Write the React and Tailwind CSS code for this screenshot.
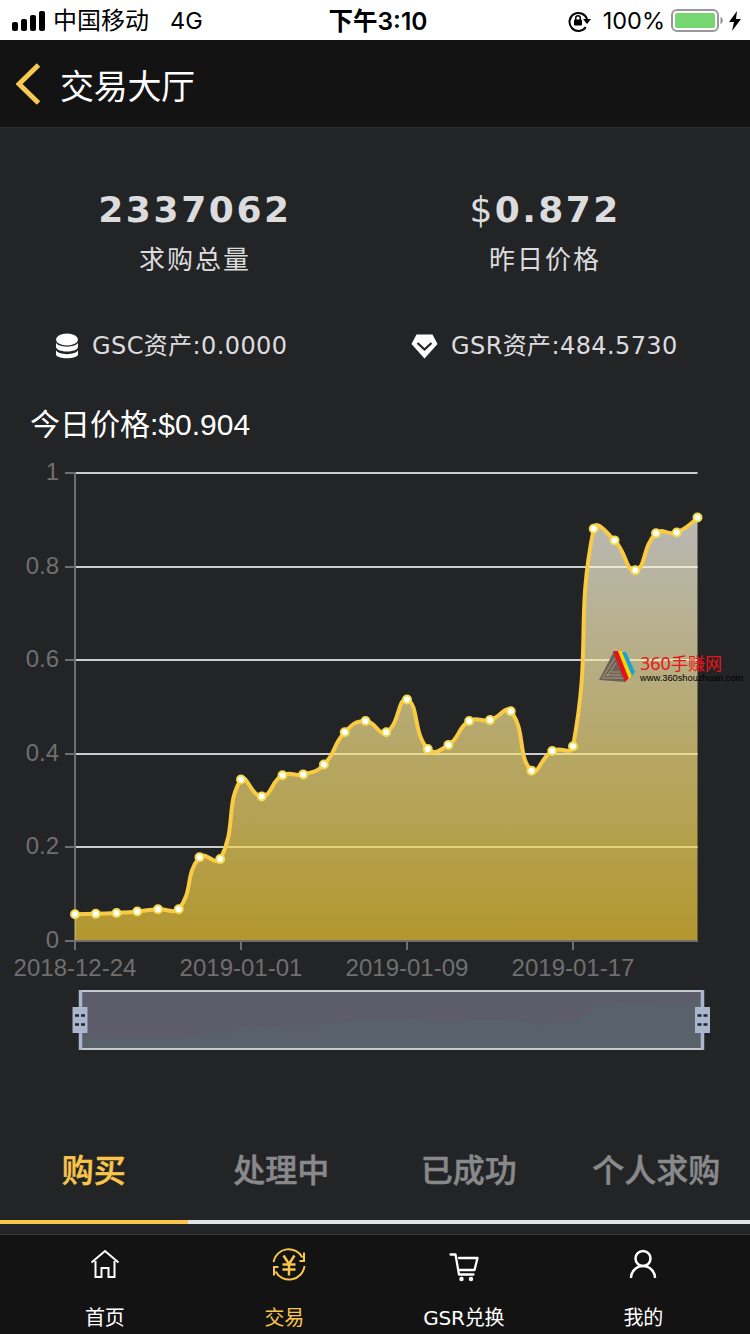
const prices = [
  0.057, 0.058, 0.06, 0.063, 0.068, 0.068, 0.179, 0.175, 0.345, 0.309, 0.354,
  0.356, 0.377, 0.446, 0.47, 0.446, 0.516, 0.41, 0.419, 0.47, 0.472, 0.491,
  0.364, 0.406, 0.416, 0.881, 0.856, 0.792, 0.871, 0.873, 0.905,
];

const ticks = [1, 0.8, 0.6, 0.4, 0.2, 0];

const dates = [
  { label: "2018-12-24", x: 75 },
  { label: "2019-01-01", x: 241 },
  { label: "2019-01-09", x: 407 },
  { label: "2019-01-17", x: 573 },
];

const tabs = ["购买", "处理中", "已成功", "个人求购"];

const X0 = 75;
const STEP = 20.75;
const Y0 = 481;
const HEIGHT = 468;

const points = prices.map((p, i) => [X0 + i * STEP, Y0 - p * HEIGHT]);

// Bezier through every point, control points kept inside the data's bounds
function smoothPath(pts, smooth = 0.5) {
  const ys = pts.map((p) => p[1]);
  const min = Math.min(...ys);
  const max = Math.max(...ys);
  const clamp = (y) => Math.max(min, Math.min(max, y));
  let d = `M${pts[0][0]},${pts[0][1]}`;
  let cp0 = pts[0];
  for (let i = 1; i < pts.length; i++) {
    const p = pts[i];
    const prev = pts[i - 1];
    const next = pts[i + 1] || p;
    const lenPrev = Math.hypot(p[0] - prev[0], p[1] - prev[1]);
    const lenNext = Math.hypot(p[0] - next[0], p[1] - next[1]);
    const ratio = lenNext / (lenNext + lenPrev);
    const v = [next[0] - prev[0], next[1] - prev[1]];
    const k = smooth * (1 - ratio);
    const cp1 = i === pts.length - 1 ? p : [p[0] - v[0] * k, clamp(p[1] - v[1] * k)];
    d += `C${cp0[0]},${cp0[1]} ${cp1[0]},${cp1[1]} ${p[0]},${p[1]}`;
    cp0 = [p[0] + v[0] * smooth * ratio, clamp(p[1] + v[1] * smooth * ratio)];
  }
  return d;
}

function StatusBar() {
  return (
    <div className="h-10 shrink-0 bg-white text-black grid grid-cols-3 items-center font-['Inter','Noto_Sans_CJK_SC',sans-serif] text-[23.5px] leading-[42px]">
      <div className="flex items-center pl-3">
        <svg width="34" height="20" viewBox="0 0 34 20" className="shrink-0">
          <rect x="0" y="11" width="6" height="9" rx="2" />
          <rect x="9" y="8" width="6" height="12" rx="2" />
          <rect x="18" y="4" width="6" height="16" rx="2" />
          <rect x="27" y="0" width="6" height="20" rx="2" />
        </svg>
        <span className="ml-[7px] text-2xl leading-[42px]">中国移动</span>
        <span className="ml-[21px]">4G</span>
      </div>
      <div className="text-center text-[24.5px] font-semibold whitespace-nowrap pl-[6px]">下午3:10</div>
      <div className="flex items-center justify-end pr-[9px]">
        <svg width="24" height="22" viewBox="0 0 24 22" className="mr-[11px] shrink-0">
          <path d="M17.8 17.2A9 9 0 1 1 19 9" fill="none" stroke="#000" strokeWidth="2" />
          <path d="M15 9h8l-4 5z" />
          <rect x="6" y="9.5" width="8" height="6" rx="1" />
          <path d="M7.7 10V8a2.3 2.3 0 0 1 4.6 0v2" fill="none" stroke="#000" strokeWidth="1.5" />
        </svg>
        <span>100%</span>
        <svg width="53" height="24" viewBox="0 0 53 24" className="ml-[6px] shrink-0">
          <rect x="1" y="1" width="46" height="21" rx="5" fill="none" stroke="#9b969c" strokeWidth="2" />
          <rect x="4" y="4" width="40" height="15" rx="2" fill="#76d672" />
          <path d="M49.5 8c3 1 3 6 0 7z" fill="#8e8e93" />
        </svg>
        <svg width="12" height="20" viewBox="0 0 12 20" className="ml-[5px] shrink-0">
          <path d="M8 0L0 11h5L3 20l9-12H7z" />
        </svg>
      </div>
    </div>
  );
}

function Header() {
  return (
    <div className="h-[88px] shrink-0 bg-[#131313] border-b border-[#2f2f31] flex items-center pl-4">
      <svg width="25" height="42" viewBox="0 0 25 42" className="shrink-0">
        <path d="M22.5 2L3 21l19.500 19" fill="none" stroke="#f7cb4f" strokeWidth="5" />
      </svg>
      <h1 className="ml-[19px] mt-[3px] text-white text-[34px] leading-none tracking-[-0.3px]">交易大厅</h1>
    </div>
  );
}

function Stats() {
  return (
    <div className="text-[#dcdcde] font-['DejaVu_Sans','Noto_Sans_CJK_SC',sans-serif]">
      <div className="grid grid-cols-2 text-center pt-[59px] pr-[45px] pl-[25px]">
        <div>
          <div className="text-[36px] leading-[46px] font-bold tracking-[2.600px]">2337062</div>
          <div className="mt-2 text-[26px] leading-[38px] tracking-[2px]">求购总量</div>
        </div>
        <div className="pl-5">
          <div className="text-[36px] leading-[46px] tracking-[2.400px] whitespace-nowrap">
            $<b>0.872</b>
          </div>
          <div className="mt-2 text-[26px] leading-[38px] tracking-[2px]">昨日价格</div>
        </div>
      </div>
      <div className="flex mt-[49px] h-9 items-center text-2xl tracking-[0.4px]">
        <div className="w-[356px] pl-[55px] flex items-center">
          <svg width="24" height="26" viewBox="0 0 24 26" fill="#fff" className="shrink-0">
            <ellipse cx="12" cy="6.500" rx="11" ry="6" />
            <path d="M1 9.500c1.500 5.500 20.500 5.500 22 0v4.500c-1 6-21 6-22 0z" />
            <path d="M1 17c1.500 5.500 20.500 5.500 22 0v4.500c-1 5-21 5-22 0z" />
          </svg>
          <span className="ml-[13px] whitespace-nowrap">GSC资产:0.0000</span>
        </div>
        <div className="pl-[55px] flex items-center">
          <svg width="27" height="25" viewBox="0 0 27 25" className="shrink-0">
            <path d="M5.500 0.500h16L26.500 10 13.500 24.500 0.500 10z" fill="#fff" />
            <path d="M6.500 9l7 6.500 7-6.500" fill="none" stroke="#232426" strokeWidth="2.200" />
          </svg>
          <span className="ml-[13px] whitespace-nowrap">GSR资产:484.5730</span>
        </div>
      </div>
    </div>
  );
}

function Handle({ x }) {
  return (
    <g>
      <rect x={x - 7.500} y="547" width="15" height="26" fill="#a9b6cd" />
      <path d={`M${x - 5} 555.500h4m2 0h4M${x - 5} 564.500h4m2 0h4`} stroke="#232426" strokeWidth="2.500" />
    </g>
  );
}

function PriceChart() {
  const line = smoothPath(points);
  const mini = points.map(([x, y]) => `L${80 + (x - 75)},${581 - (Y0 - y) * 0.096}`).join("");
  return (
    <svg width="750" height="612" viewBox="0 -12 750 612" className="block" fontFamily="'Liberation Sans', Arial, sans-serif" fontSize="24">
      <defs>
        <linearGradient id="area" x1="0" y1="57" x2="0" y2="481" gradientUnits="userSpaceOnUse">
          <stop offset="0" stopColor="#f8f7f0" />
          <stop offset="0.55" stopColor="#f5df81" />
          <stop offset="1" stopColor="#f0c833" />
        </linearGradient>
      </defs>
      {ticks.map((t) => {
        const y = Math.round(Y0 - t * HEIGHT);
        return (
          <g key={t}>
            {t > 0 && <path d={`M75 ${y}H697.500`} stroke="#ccc" strokeWidth="2" />}
            <path d={`M65 ${y}H75`} stroke="#6e6e70" strokeWidth="2" />
            <text x="59" y={y + 7} textAnchor="end" fill="#6f6f71">{t}</text>
          </g>
        );
      })}
      <path d="M75 12V482" stroke="#6e6e70" strokeWidth="2" />
      {dates.map((d) => (
        <g key={d.label}>
          <path d={`M${d.x} 481v9`} stroke="#6e6e70" strokeWidth="2" />
          <text x={d.x} y="516" textAnchor="middle" fill="#6f6f71">{d.label}</text>
        </g>
      ))}
      <path d={`${line}V481H75Z`} fill="url(#area)" fillOpacity="0.7" />
      <path d="M74 481H698" stroke="#6e6e70" strokeWidth="2" />
      <path d={line} fill="none" stroke="#f9cb45" strokeWidth="4" strokeLinejoin="bevel" />
      {points.map(([x, y]) => (
        <circle key={x} cx={x} cy={y} r="4" fill="#fff" stroke="#f3d94e" strokeWidth="2" />
      ))}

      {/* zoom slider */}
      <rect x="80" y="531" width="623" height="58" fill="#5c5d68" />
      <path d={`M80,589${mini}V589Z`} fill="#59616b" />
      <path d="M79 531H704M79 589H704" stroke="#c5c9ce" strokeWidth="2" />
      <path d="M80.500 530V590M702.500 530V590" stroke="#a9b6cd" strokeWidth="3.500" />
      <Handle x={80} />
      <Handle x={702.500} />
    </svg>
  );
}

function Watermark() {
  return (
    <div className="absolute left-[598px] top-[650px] flex items-start">
      <svg width="38" height="34" viewBox="0 0 38 34" className="shrink-0">
        <path d="M16 1L1 30l27 2z" fill="#6d625a" />
        <path d="M17 8L5 27M18 13L9 26M4 28l22 0M8 25l15 0M13 22l9 0" stroke="#b9ac80" strokeWidth="0.8" />
        <path d="M15 1h5l11 27-4 4z" fill="#e0151b" />
        <path d="M20 1h4l10 24-3 4z" fill="#ffd400" />
        <path d="M24 2h4l9 20-3 4z" fill="#14a5d8" />
      </svg>
      <div className="ml-1 whitespace-nowrap">
        <div className="text-[#e8141a] text-[17px] leading-[20px] mt-[3px]">
          <span className="font-['Noto_Sans','Noto_Sans_CJK_SC',sans-serif] text-[18px]">360</span>手赚网
        </div>
        <div className="text-black text-[9.300px] leading-[10px] font-['Liberation_Sans',sans-serif]">www.360shouzhuan.com</div>
      </div>
    </div>
  );
}

function Tabs() {
  return (
    <div className="h-[104px] grid grid-cols-4 text-center text-[32px] leading-[48px] font-medium whitespace-nowrap [-webkit-text-stroke:0.5px]">
      {tabs.map((tab, i) => (
        <div
          key={tab}
          className={
            i === 0
              ? "pt-[24px] border-b-4 border-[#f7c64a] text-[#f7c64a]"
              : "pt-[24px] border-b-4 border-[#e4e4e6] text-[#88898b]"
          }
        >
          {tab}
        </div>
      ))}
    </div>
  );
}

function NavItem({ label, children, className = "text-white" }) {
  return (
    <div className={`flex flex-col items-center ${className}`}>
      <svg width="36" height="36" viewBox="0 0 36 36" fill="none" stroke="currentColor" strokeWidth="2" className="mt-[11px] overflow-visible">
        {children}
      </svg>
      <span className="mt-[22px] text-[20px] leading-7 tracking-[-0.2px] whitespace-nowrap">{label}</span>
    </div>
  );
}

function BottomNav() {
  return (
    <div className="h-[100px] shrink-0 bg-[#131313] border-t border-[#39393b] grid grid-cols-4 pl-[15px] pr-[17px] font-['DejaVu_Sans','Noto_Sans_CJK_SC',sans-serif]">
      <NavItem label="首页">
        <path d="M4.500 16.500L18 5l13.500 11.500M8.500 15v16h6v-9h7v9h6V15" />
      </NavItem>
      <NavItem label="交易" className="text-[#f7c64a]">
        <path d="M7.500 16A15.500 15.500 0 0 1 36.500 11.500M38 6.500v8.500h-4.500M38.500 20A15.500 15.500 0 0 1 9.500 25.500M8 29.500v-8.500h4.500" />
        <path d="M17.500 9.500l5.500 8.500 5.500-8.500M23 18v11.500M16.500 18.500h13M16.500 23.500h13" strokeWidth="2.500" />
      </NavItem>
      <NavItem label="GSR兑换">
        <path d="M4.500 8.500h5L13 28.500h14.500M13 12h18.500l-3 12H14" strokeWidth="2.300" strokeLinejoin="round" strokeLinecap="round" />
        <circle cx="15.500" cy="33" r="1.200" />
        <circle cx="25" cy="33" r="1.200" />
      </NavItem>
      <NavItem label="我的">
        <circle cx="18" cy="12.500" r="7.500" strokeWidth="2.500" />
        <path d="M6 32a12 12 0 0 1 24 0" strokeWidth="2.500" />
      </NavItem>
    </div>
  );
}

export default function App() {
  return (
    <div className="relative w-[750px] h-[1334px] bg-[#232426] flex flex-col overflow-hidden font-['Noto_Sans_CJK_SC',sans-serif]">
      <StatusBar />
      <Header />
      <main className="flex-1 min-h-0">
        <Stats />
        <div className="mt-[39px] h-[45px] pl-[30px] text-white text-[30px] leading-[44px] font-['Liberation_Sans','Noto_Sans_CJK_SC',sans-serif]">
          今日价格:$0.904
        </div>
        <PriceChart />
        <div className="h-[60px]" />
        <Tabs />
      </main>
      <BottomNav />
      <Watermark />
    </div>
  );
}
